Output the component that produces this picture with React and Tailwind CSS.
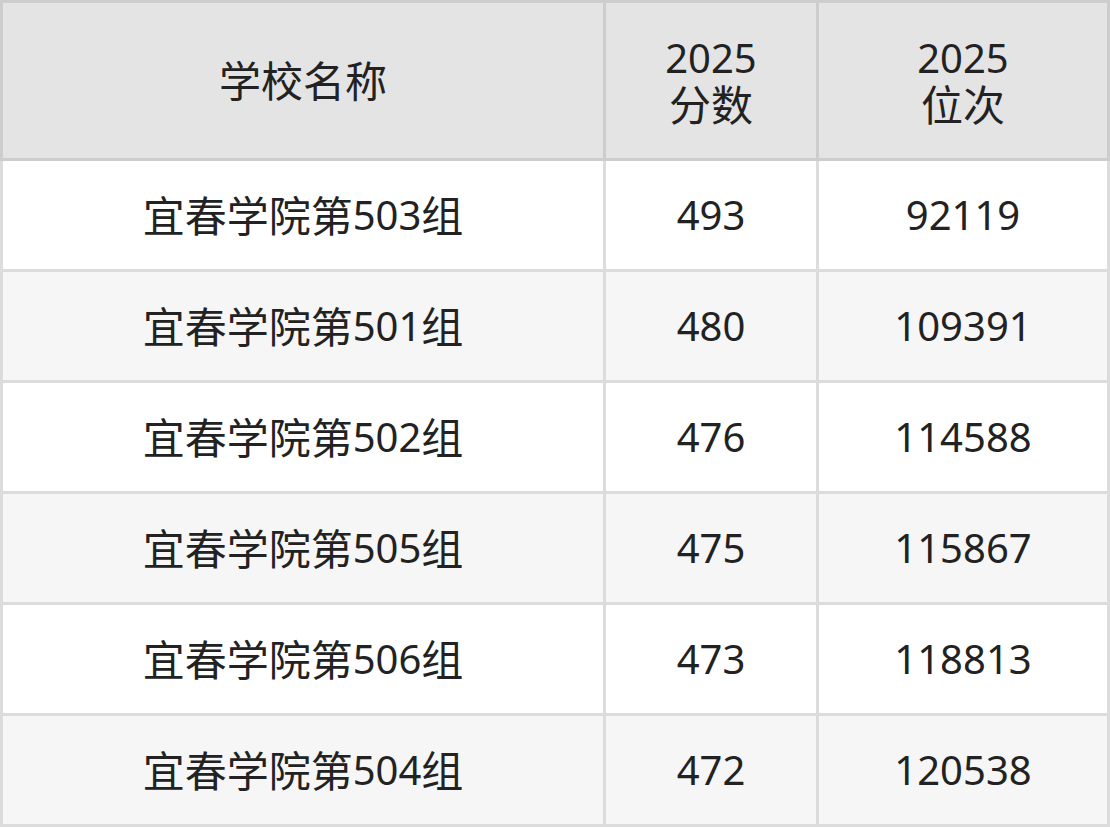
import React from 'react';

const rows = [
  ['503', '493', '92119'],
  ['501', '480', '109391'],
  ['502', '476', '114588'],
  ['505', '475', '115867'],
  ['506', '473', '118813'],
  ['504', '472', '120538'],
];

export default function App() {
  return (
    <div
      className="w-[1110px] h-[828px] bg-white text-[#222] text-[40px]"
      style={{ fontFamily: '"Noto Sans", "Noto Sans CJK SC", sans-serif' }}
    >
      {/* Header */}
      <div className="grid grid-cols-[606px_213px_291px] h-[161px] bg-[#e4e4e4]">
        <div className="border-[3px] border-[#cdcdcd] flex items-center justify-center text-[42px]">学校名称</div>
        <div className="border-y-[3px] border-r-[3px] border-[#cdcdcd] flex flex-col items-center justify-center leading-[47px]">
          <span>2025</span>
          <span className="text-[42px]">分数</span>
        </div>
        <div className="border-y-[3px] border-r-[3px] border-[#cdcdcd] flex flex-col items-center justify-center leading-[47px]">
          <span>2025</span>
          <span className="text-[42px]">位次</span>
        </div>
      </div>

      {/* Body */}
      {rows.map((r, i) => (
        <div
          key={i}
          className={`grid grid-cols-[606px_213px_291px] h-[111px] ${i % 2 === 1 ? 'bg-[#f6f6f6]' : 'bg-white'}`}
        >
          <div className="border-x-[3px] border-b-[3px] border-[#dcdcdc] flex items-center justify-center">
            <span className="text-[42px]">宜春学院第</span>
            <span>{r[0]}</span>
            <span className="text-[42px]">组</span>
          </div>
          <div className="border-r-[3px] border-b-[3px] border-[#dcdcdc] flex items-center justify-center">{r[1]}</div>
          <div className="border-r-[3px] border-b-[3px] border-[#dcdcdc] flex items-center justify-center">{r[2]}</div>
        </div>
      ))}
    </div>
  );
}
